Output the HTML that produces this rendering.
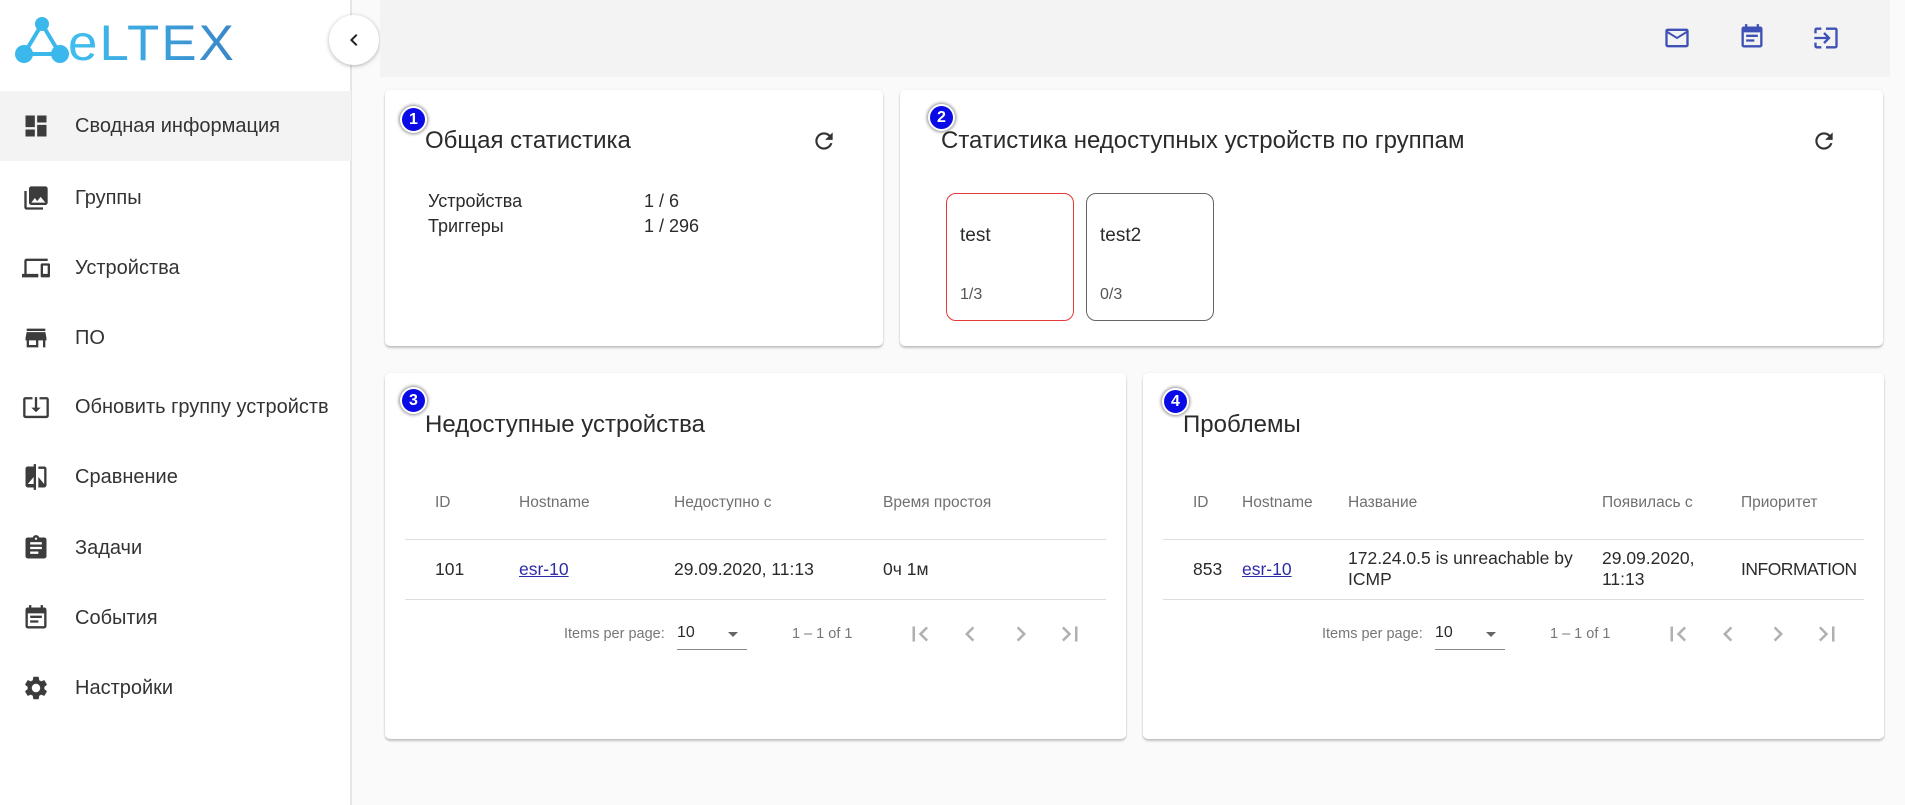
<!DOCTYPE html>
<html><head><meta charset="utf-8"><style>
*{margin:0;padding:0;box-sizing:border-box}
body{width:1905px;height:805px;overflow:hidden;background:#fafafa;font-family:"Liberation Sans",sans-serif;color:#333;position:relative}
.abs{position:absolute}
.side{left:0;top:0;width:352px;height:805px;background:#fff;border-right:2px solid #e6e6e6}
.item{position:absolute;left:0;width:351px;height:70px;display:flex;align-items:center}
.item svg{position:absolute;left:22px;width:28px;height:28px;fill:#3c3c3c}
.item span{position:absolute;left:75px;font-size:20px;color:#333}
.card{position:absolute;background:#fff;border-radius:5px;box-shadow:0 2px 2px rgba(0,0,0,.22),0 0 2px rgba(0,0,0,.08)}
.title{position:absolute;font-size:24px;color:#2b2b2b}
.badge{position:absolute;width:27px;height:27px;border-radius:50%;background:#0a0ae6;border:2px solid #fff;box-shadow:0 0 3px 1px rgba(0,0,0,.45);color:#fff;font-weight:bold;font-size:16px;text-align:center;line-height:23px}
.ref{position:absolute;width:26px;height:26px;fill:#333}
.th{position:absolute;font-size:15.5px;color:#707070}
.td{position:absolute;font-size:17.5px;color:#2b2b2b}
.a{color:#2c2ca8;text-decoration:underline}
.hr{position:absolute;height:1px;background:#ddd}
.pg{position:absolute;font-size:14.5px;color:#777}
.pi{position:absolute;width:30px;height:30px;fill:#b0b0b0}
.gb{position:absolute;width:128px;height:128px;border-radius:10px;border:1px solid #666}
</style></head><body>
<div class="abs side"></div>
<svg class="abs" style="left:14px;top:16px" width="230" height="48" viewBox="0 0 230 48">
<defs><linearGradient id="g" x1="0" x2="1"><stop offset="0" stop-color="#3ec0f0"/><stop offset="1" stop-color="#3a86c8"/></linearGradient></defs>
<g stroke="#3ab8ec" stroke-width="4"><line x1="28" y1="8" x2="10" y2="38"/><line x1="28" y1="8" x2="46" y2="38"/><line x1="10" y1="38" x2="46" y2="38"/></g>
<circle cx="28" cy="8" r="7" fill="#3ab8ec"/><circle cx="10" cy="38" r="9" fill="#3ab8ec"/><circle cx="46" cy="38" r="9" fill="#3ab8ec"/>
<text x="54" y="44" font-family="Liberation Sans" font-size="50" fill="url(#g)" letter-spacing="2" textLength="168" lengthAdjust="spacingAndGlyphs">eLTEX</text>
</svg>
<div class="abs" style="left:329px;top:15px;width:50px;height:50px;border-radius:50%;background:#fff;box-shadow:0 1px 4px rgba(0,0,0,.3)"><svg style="position:absolute;left:13px;top:13px" width="24" height="24" viewBox="0 0 24 24"><path d="M15.41 7.41L14 6l-6 6 6 6 1.41-1.41L10.83 12z" fill="#222"/></svg></div>

<div class="item" style="top:91px;background:#f3f3f3"><svg viewBox="0 0 24 24"><path d="M3 13h8V3H3v10zm0 8h8v-6H3v6zm10 0h8V11h-8v10zm0-18v6h8V3h-8z"/></svg><span>Сводная информация</span></div>
<div class="item" style="top:163px"><svg viewBox="0 0 24 24"><path d="M22 16V4c0-1.1-.9-2-2-2H8c-1.1 0-2 .9-2 2v12c0 1.1.9 2 2 2h12c1.1 0 2-.9 2-2zm-11-4l2.03 2.71L16 11l4 5H8l3-4zM2 6v14c0 1.1.9 2 2 2h14v-2H4V6H2z"/></svg><span>Группы</span></div>
<div class="item" style="top:233px"><svg viewBox="0 0 24 24"><path d="M4 6h18V4H4c-1.1 0-2 .9-2 2v11H0v3h14v-3H4V6zm19 2h-6c-.55 0-1 .45-1 1v10c0 .55.45 1 1 1h6c.55 0 1-.45 1-1V9c0-.55-.45-1-1-1zm-1 9h-4v-7h4v7z"/></svg><span>Устройства</span></div>
<div class="item" style="top:303px"><svg viewBox="0 0 24 24"><path d="M20 4H4v2h16V4zm1 10v-2l-1-5H4l-1 5v2h1v6h10v-6h4v6h2v-6h1zm-9 4H6v-4h6v4z"/></svg><span>ПО</span></div>
<div class="item" style="top:372px"><svg viewBox="0 0 24 24"><path d="M12 16.5l4-4h-3v-9h-2v9H8l4 4zm9-13h-6v1.99h6v14.03H3V5.49h6V3.5H3c-1.1 0-2 .9-2 2v14c0 1.1.9 2 2 2h18c1.1 0 2-.9 2-2v-14c0-1.1-.9-2-2-2z"/></svg><span>Обновить группу устройств</span></div>
<div class="item" style="top:442px"><svg viewBox="0 0 24 24"><path d="M10 3H5c-1.11 0-2 .9-2 2v14c0 1.1.89 2 2 2h5v2h2V1h-2v2zm0 15H5l5-6v6zm9-15h-5v2h5v13l-5-6v9h5c1.1 0 2-.9 2-2V5c0-1.1-.9-2-2-2z"/></svg><span>Сравнение</span></div>
<div class="item" style="top:513px"><svg viewBox="0 0 24 24"><path d="M19 3h-4.18C14.4 1.84 13.3 1 12 1c-1.3 0-2.4.84-2.82 2H5c-1.1 0-2 .9-2 2v14c0 1.1.9 2 2 2h14c1.1 0 2-.9 2-2V5c0-1.1-.9-2-2-2zm-7 0c.55 0 1 .45 1 1s-.45 1-1 1-1-.45-1-1 .45-1 1-1zm2 14H7v-2h7v2zm3-4H7v-2h10v2zm0-4H7V7h10v2z"/></svg><span>Задачи</span></div>
<div class="item" style="top:583px"><svg viewBox="0 0 24 24"><path d="M17 10H7v2h10v-2zm2-7h-1V1h-2v2H8V1H6v2H5c-1.11 0-1.99.9-1.99 2L3 19c0 1.1.89 2 2 2h14c1.1 0 2-.9 2-2V5c0-1.1-.9-2-2-2zm0 16H5V8h14v11zm-5-5H7v2h7v-2z"/></svg><span>События</span></div>
<div class="item" style="top:653px"><svg viewBox="0 0 24 24"><path d="M19.14 12.94c.04-.3.06-.61.06-.94 0-.32-.02-.64-.07-.94l2.03-1.58a.49.49 0 00.12-.61l-1.92-3.32a.488.488 0 00-.59-.22l-2.39.96c-.5-.38-1.030-.7-1.62-.94l-.36-2.54a.484.484 0 00-.48-.41h-3.84c-.24 0-.43.17-.47.41l-.36 2.54c-.59.24-1.13.57-1.62.94l-2.39-.96c-.22-.08-.47 0-.59.22L2.74 8.87c-.12.21-.08.47.12.61l2.03 1.58c-.05.3-.09.63-.09.94s.02.64.07.94l-2.03 1.58a.49.49 0 00-.12.61l1.92 3.32c.12.22.37.29.59.22l2.39-.96c.5.38 1.03.7 1.62.94l.36 2.54c.05.24.24.41.48.41h3.84c.24 0 .44-.17.47-.41l.36-2.54c.59-.24 1.13-.56 1.62-.94l2.39.96c.22.08.47 0 .59-.22l1.92-3.32c.12-.22.07-.47-.12-.61l-2.01-1.58zM12 15.6c-1.98 0-3.6-1.62-3.6-3.6s1.62-3.6 3.6-3.6 3.6 1.62 3.6 3.6-1.62 3.6-3.6 3.6z"/></svg><span>Настройки</span></div>

<div class="abs" style="left:380px;top:0;width:1510px;height:77px;background:#f3f3f3"></div>
<svg class="abs" style="left:1663px;top:24px;fill:#3f51b5" width="28" height="28" viewBox="0 0 24 24"><path d="M20 4H4c-1.1 0-1.99.9-1.99 2L2 18c0 1.1.9 2 2 2h16c1.1 0 2-.9 2-2V6c0-1.1-.9-2-2-2zm0 14H4V8l8 5 8-5v10zm-8-7L4 6h16l-8 5z"/></svg>
<svg class="abs" style="left:1738px;top:23px;fill:#3f51b5" width="28" height="28" viewBox="0 0 24 24"><path d="M17 10H7v2h10v-2zm2-7h-1V1h-2v2H8V1H6v2H5c-1.11 0-1.99.9-1.99 2L3 19c0 1.1.89 2 2 2h14c1.1 0 2-.9 2-2V5c0-1.1-.9-2-2-2zm0 16H5V8h14v11zm-5-5H7v2h7v-2z"/></svg>
<svg class="abs" style="left:1812px;top:24px;fill:#3f51b5" width="28" height="28" viewBox="0 0 24 24"><path d="M11 7L9.6 8.4l2.6 2.6H2v2h10.2l-2.6 2.6L11 17l5-5-5-5zm9 12h-8v2h8c1.1 0 2-.9 2-2V5c0-1.1-.9-2-2-2h-8v2h8v14zM4 3h4v2H4v3H2V5c0-1.1.9-2 2-2zm0 18h4v-2H4v-3H2v3c0 1.1.9 2 2 2z"/></svg>

<div class="card" style="left:385px;top:90px;width:498px;height:256px"></div>
<div class="title" style="left:425px;top:127px">Общая статистика</div>
<svg class="ref" style="left:811px;top:128px" viewBox="0 0 24 24"><path d="M17.65 6.35A7.958 7.958 0 0012 4c-4.42 0-7.99 3.58-7.99 8s3.57 8 7.99 8c3.73 0 6.84-2.55 7.73-6h-2.08A5.99 5.99 0 0112 18c-3.31 0-6-2.69-6-6s2.69-6 6-6c1.66 0 3.14.69 4.22 1.78L13 11h7V4l-2.35 2.35z"/></svg>
<div class="td" style="left:428px;top:191px;font-size:18px">Устройства</div>
<div class="td" style="left:644px;top:191px;font-size:18px">1 / 6</div>
<div class="td" style="left:428px;top:216px;font-size:18px">Триггеры</div>
<div class="td" style="left:644px;top:216px;font-size:18px">1 / 296</div>
<div class="badge" style="left:400px;top:106px">1</div>

<div class="card" style="left:900px;top:90px;width:983px;height:256px"></div>
<div class="title" style="left:941px;top:127px">Статистика недоступных устройств по группам</div>
<svg class="ref" style="left:1811px;top:128px" viewBox="0 0 24 24"><path d="M17.65 6.35A7.958 7.958 0 0012 4c-4.42 0-7.99 3.58-7.99 8s3.57 8 7.99 8c3.73 0 6.84-2.55 7.73-6h-2.08A5.99 5.99 0 0112 18c-3.31 0-6-2.69-6-6s2.69-6 6-6c1.66 0 3.14.69 4.22 1.78L13 11h7V4l-2.35 2.35z"/></svg>
<div class="gb" style="left:946px;top:193px;border-color:#e53935"></div>
<div class="td" style="left:960px;top:225px;font-size:19px">test</div>
<div class="td" style="left:960px;top:286px;font-size:16px;color:#555">1/3</div>
<div class="gb" style="left:1086px;top:193px"></div>
<div class="td" style="left:1100px;top:225px;font-size:19px">test2</div>
<div class="td" style="left:1100px;top:286px;font-size:16px;color:#555">0/3</div>
<div class="badge" style="left:928px;top:104px">2</div>

<div class="card" style="left:385px;top:373px;width:741px;height:366px"></div>
<div class="title" style="left:425px;top:411px">Недоступные устройства</div>
<div class="th" style="left:435px;top:494px">ID</div>
<div class="th" style="left:519px;top:494px">Hostname</div>
<div class="th" style="left:674px;top:494px">Недоступно с</div>
<div class="th" style="left:883px;top:494px">Время простоя</div>
<div class="hr" style="left:405px;top:539px;width:701px"></div>
<div class="td" style="left:435px;top:559px">101</div>
<div class="td a" style="left:519px;top:559px">esr-10</div>
<div class="td" style="left:674px;top:559px">29.09.2020, 11:13</div>
<div class="td" style="left:883px;top:559px">0ч 1м</div>
<div class="hr" style="left:405px;top:599px;width:701px"></div>
<div class="pg" style="left:564px;top:626px">Items per page:</div>
<div class="td" style="left:677px;top:624px;font-size:16px">10</div>
<div class="abs" style="left:728px;top:632px;border:5px solid transparent;border-top:5px solid #666"></div>
<div class="abs" style="left:677px;top:649px;width:70px;height:1px;background:#888"></div>
<div class="pg" style="left:792px;top:626px">1 – 1 of 1</div>
<svg class="pi" style="left:905px;top:619px" viewBox="0 0 24 24"><path d="M18.41 16.59L13.82 12l4.59-4.59L17 6l-6 6 6 6zM6 6h2v12H6z"/></svg>
<svg class="pi" style="left:955px;top:619px" viewBox="0 0 24 24"><path d="M15.41 7.41L14 6l-6 6 6 6 1.41-1.41L10.83 12z"/></svg>
<svg class="pi" style="left:1006px;top:619px" viewBox="0 0 24 24"><path d="M10 6L8.59 7.41 13.17 12l-4.58 4.59L10 18l6-6z"/></svg>
<svg class="pi" style="left:1055px;top:619px" viewBox="0 0 24 24"><path d="M5.59 7.41L10.18 12l-4.59 4.59L7 18l6-6-6-6zM16 6h2v12h-2z"/></svg>
<div class="badge" style="left:400px;top:387px">3</div>

<div class="card" style="left:1143px;top:373px;width:741px;height:366px"></div>
<div class="title" style="left:1183px;top:411px">Проблемы</div>
<div class="th" style="left:1193px;top:494px">ID</div>
<div class="th" style="left:1242px;top:494px">Hostname</div>
<div class="th" style="left:1348px;top:494px">Название</div>
<div class="th" style="left:1602px;top:494px">Появилась с</div>
<div class="th" style="left:1741px;top:494px">Приоритет</div>
<div class="hr" style="left:1163px;top:539px;width:701px"></div>
<div class="td" style="left:1193px;top:559px">853</div>
<div class="td a" style="left:1242px;top:559px">esr-10</div>
<div class="td" style="left:1348px;top:548px;line-height:21px;width:240px">172.24.0.5 is unreachable by ICMP</div>
<div class="td" style="left:1602px;top:548px;line-height:21px">29.09.2020,<br>11:13</div>
<div class="td" style="left:1741px;top:559px;letter-spacing:-0.5px">INFORMATION</div>
<div class="hr" style="left:1163px;top:599px;width:701px"></div>
<div class="pg" style="left:1322px;top:626px">Items per page:</div>
<div class="td" style="left:1435px;top:624px;font-size:16px">10</div>
<div class="abs" style="left:1486px;top:632px;border:5px solid transparent;border-top:5px solid #666"></div>
<div class="abs" style="left:1435px;top:649px;width:70px;height:1px;background:#888"></div>
<div class="pg" style="left:1550px;top:626px">1 – 1 of 1</div>
<svg class="pi" style="left:1663px;top:619px" viewBox="0 0 24 24"><path d="M18.41 16.59L13.82 12l4.59-4.59L17 6l-6 6 6 6zM6 6h2v12H6z"/></svg>
<svg class="pi" style="left:1713px;top:619px" viewBox="0 0 24 24"><path d="M15.41 7.41L14 6l-6 6 6 6 1.41-1.41L10.83 12z"/></svg>
<svg class="pi" style="left:1763px;top:619px" viewBox="0 0 24 24"><path d="M10 6L8.59 7.41 13.17 12l-4.58 4.59L10 18l6-6z"/></svg>
<svg class="pi" style="left:1812px;top:619px" viewBox="0 0 24 24"><path d="M5.59 7.41L10.18 12l-4.59 4.59L7 18l6-6-6-6zM16 6h2v12h-2z"/></svg>
<div class="badge" style="left:1162px;top:388px">4</div>
</body></html>
